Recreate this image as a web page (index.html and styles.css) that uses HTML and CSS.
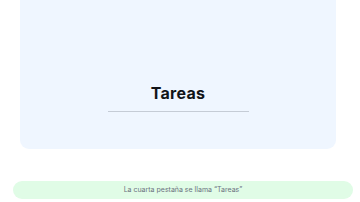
FILE: index.html
```html
<!DOCTYPE html>
<html lang="es">

<head>
    <meta charset="UTF-8">
    <meta name="viewport" content="width=device-width, initial-scale=1.0">
    <title>Tareas</title>
    <link rel="stylesheet" href="styles.css">
</head>

<body>
    <div class="screen">
        <div class="tab-card">
            <h2 class="tab-title">Tareas</h2>
            <div class="tab-line"></div>
        </div>

        <div class="caption">La cuarta pestaña se llama “Tareas”</div>
    </div>
</body>

</html>
```

FILE: styles.css
```css
:root {
    --card: #eff6ff;
    --ink: #111418;
    --line: #c5ccd6;
    --note: #e0fce6;
    --note-text: #6b7280;
}

* {
    margin: 0;
    padding: 0;
    box-sizing: border-box;
    font-family: Inter, 'Noto Sans', Arial, sans-serif;
}

body {
    background-color: #fff;
    width: 360px;
    height: 202px;
    overflow: hidden;
}

.screen {
    display: flex;
    flex-direction: column;
}

.tab-card {
    background-color: var(--card);
    margin: 0 24px 0 20px;
    height: 149px;
    border-radius: 0 0 9px 9px;
    display: flex;
    flex-direction: column;
    justify-content: flex-end;
    align-items: center;
    padding-bottom: 37px;
}

.tab-title {
    color: var(--ink);
    font-size: 16px;
    line-height: 20px;
    font-weight: 700;
    letter-spacing: 0.3px;
}

.tab-line {
    width: 141px;
    height: 1px;
    margin-top: 8px;
    background-color: var(--line);
}

.caption {
    margin: 32px 7px 0 13px;
    height: 18px;
    border-radius: 9px;
    background-color: var(--note);
    color: var(--note-text);
    font-size: 7px;
    line-height: 18px;
    text-align: center;
}
```
